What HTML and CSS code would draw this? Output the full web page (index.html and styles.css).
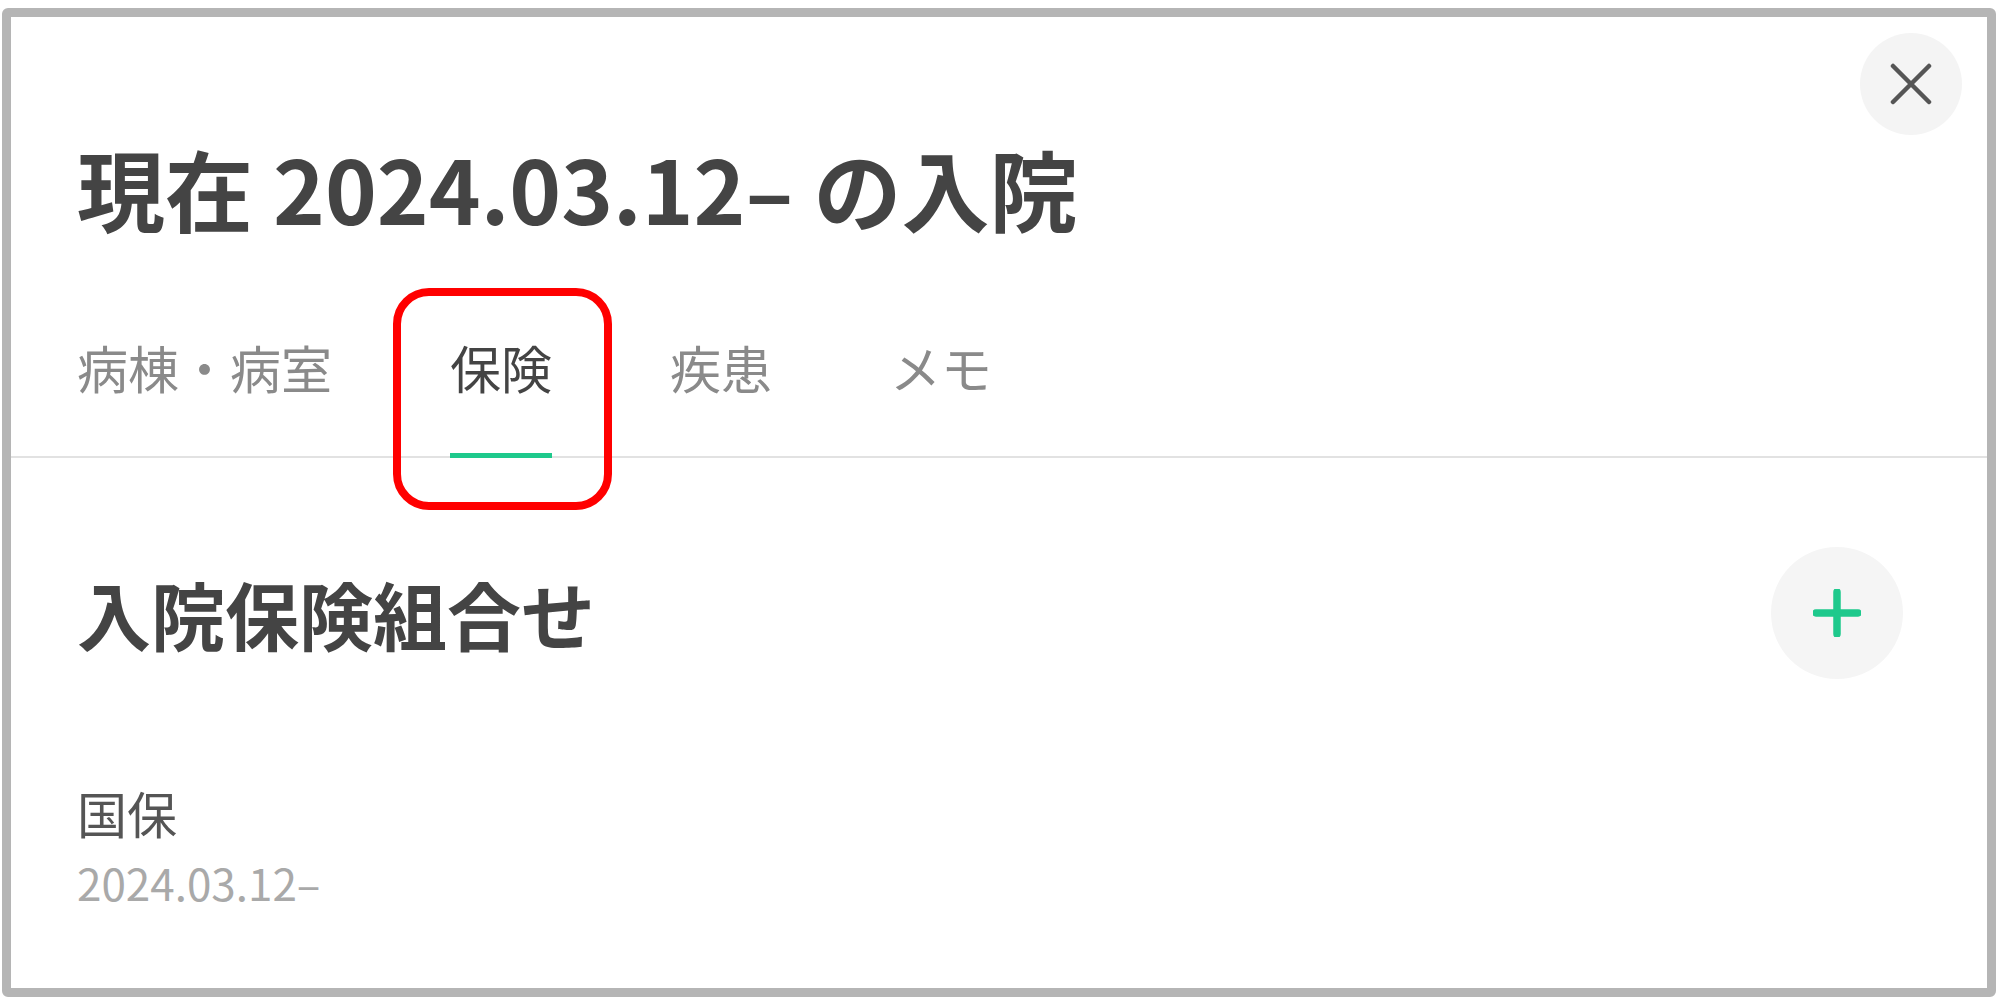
FILE: index.html
```html
<!DOCTYPE html>
<html lang="ja">
<head>
<meta charset="utf-8">
<title>入院</title>
<link rel="stylesheet" href="styles.css">
</head>
<body>
<div class="frame">
  <div class="top-bar">
    <button class="icon-btn close-btn" aria-label="閉じる">
      <svg width="42" height="42" viewBox="0 0 42 42"><path d="M3 3 L39 39 M39 3 L3 39" stroke="#555" stroke-width="4.5" stroke-linecap="round" fill="none"/></svg>
    </button>
  </div>
  <h1 class="title">現在 2024.03.12– の入院</h1>
  <nav class="tabs">
    <span class="tab">病棟・病室</span>
    <span class="tab active">保険</span>
    <span class="tab">疾患</span>
    <span class="tab">メモ</span>
  </nav>
  <section class="section">
    <div class="section-head">
      <h2 class="section-title">入院保険組合せ</h2>
      <button class="icon-btn add-btn" aria-label="追加">
        <svg width="48" height="48" viewBox="0 0 48 48"><path d="M24 3 V45 M3 24 H45" stroke="#1ec98c" stroke-width="7.5" stroke-linecap="round" fill="none"/></svg>
      </button>
    </div>
    <div class="item">
      <div class="item-name">国保</div>
      <div class="item-date">2024.03.12–</div>
    </div>
  </section>
  <div class="highlight"></div>
</div>
</body>
</html>
```
FILE: styles.css
```css
html, body {
  margin: 0;
  padding: 0;
  background: #ffffff;
}
body {
  font-family: "Noto Sans CJK JP", "Noto Sans", sans-serif;
  color: #444;
}
.frame {
  position: relative;
  box-sizing: border-box;
  margin: 8px 4px 0 2px;
  height: 989px;
  border: 9px solid #b5b5b5;
  border-radius: 6px;
  background: #fff;
}
.top-bar {
  display: flex;
  justify-content: flex-end;
  padding: 16px 25px 0 0;
}
.icon-btn {
  display: flex;
  align-items: center;
  justify-content: center;
  border: none;
  border-radius: 50%;
  padding: 0;
  cursor: pointer;
}
.close-btn {
  width: 102px;
  height: 102px;
  background: #f4f4f4;
}
.title {
  margin: 8px 0 0 0;
  padding-left: 66px;
  font-size: 88px;
  line-height: 1;
  font-weight: 700;
  color: #444;
  letter-spacing: 0;
}
.tabs {
  display: flex;
  gap: 118px;
  margin-top: 111px;
  padding-left: 66px;
  border-bottom: 2px solid #e2e2e2;
}
.tab {
  font-size: 51px;
  line-height: 1;
  color: #8a8a8a;
  padding-bottom: 60px;
  border-bottom: 5px solid transparent;
  margin-bottom: -2px;
}
.tab.active {
  color: #444;
  border-bottom-color: #1ec98c;
}
.section {
  padding: 89px 84px 0 66px;
}
.section-head {
  display: flex;
  align-items: center;
  justify-content: space-between;
}
.section-title {
  margin: 0;
  font-size: 74px;
  line-height: 1;
  font-weight: 700;
  color: #444;
}
.add-btn {
  width: 132px;
  height: 132px;
  background: #f5f5f5;
}
.item {
  margin-top: 108px;
}
.item-name {
  font-size: 50px;
  line-height: 1;
  color: #555;
}
.item-date {
  margin-top: 23px;
  font-size: 44px;
  line-height: 1;
  color: #a9a9a9;
}
.highlight {
  position: absolute;
  left: 382px;
  top: 271px;
  width: 219px;
  height: 222px;
  box-sizing: border-box;
  border: 8px solid #ff0000;
  border-radius: 36px;
}
```
